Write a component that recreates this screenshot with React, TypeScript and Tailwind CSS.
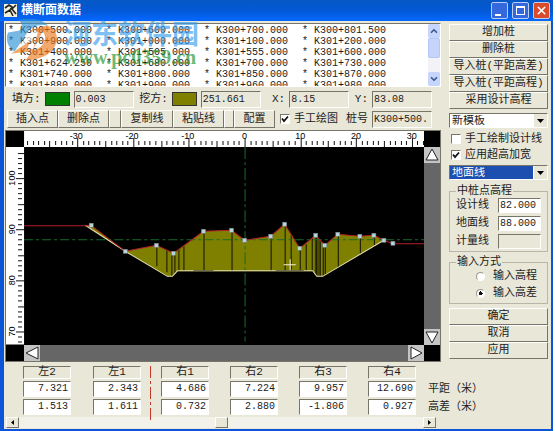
import { ChevronDown, ChevronUp, X } from "lucide-react";
import type { ReactNode } from "react";

const stations = [
  "K300+500.000", "K300+600.000", "K300+700.000", "K300+801.500",
  "K300+900.000", "K301+000.000", "K301+100.000", "K301+200.000",
  "K301+400.000", "K301+505.000", "K301+555.000", "K301+600.000",
  "K301+624.250", "K301+680.000", "K301+700.000", "K301+730.000",
  "K301+740.000", "K301+800.000", "K301+850.000", "K301+870.000",
  "K301+880.000", "K301+900.000", "K301+960.000", "K301+980.000"
];

const leftColumns = [
  { name: "左2", distance: "7.321", delta: "1.513" },
  { name: "左1", distance: "2.343", delta: "1.611" }
];

const rightColumns = [
  { name: "右1", distance: "4.686", delta: "0.732" },
  { name: "右2", distance: "7.224", delta: "2.880" },
  { name: "右3", distance: "9.957", delta: "-1.806" },
  { name: "右4", distance: "12.690", delta: "0.927" }
];

const raised =
  "border border-t-white border-l-white border-r-[#77756a] border-b-[#77756a] bg-[#e9e7d8]";
const sunken =
  "border border-t-[#77756a] border-l-[#77756a] border-r-white border-b-white";
const mono = "font-['Liberation_Mono','Noto_Sans_CJK_SC',monospace] text-[10px]";

// ground line handles, drawing coordinates
const handles = [
  [85, 94], [119, 120], [150, 114], [167, 122], [197, 100], [225, 99], [238, 109],
  [264, 105], [278, 93], [293, 117], [309, 104], [318, 114], [331, 103],
  [353, 105], [367, 104], [377, 109], [386, 112]
];

// vertical strips: x, top, bottom
const strips = [
  [150, 114, 135], [160, 119, 141], [165, 121, 145], [168, 122, 145], [172, 118, 140],
  [177, 115, 140], [197, 100, 140], [225, 99, 140], [264, 105, 140], [278, 93, 140],
  [284, 104, 140], [293, 117, 140], [299, 113, 140], [305, 107, 140],
  [309, 104, 145], [313, 108, 145], [316, 112, 145], [318, 114, 143],
  [331, 103, 136], [353, 105, 122], [367, 104, 114]
];

function RulerTop() {
  const ticks = [];
  for (let u = -39; u <= 32; u++) {
    const x = Math.round(238 + u * 5.56);
    if (x < 20) continue;
    const len = u % 10 === 0 ? 9 : u % 5 === 0 ? 6 : 4;
    ticks.push(<path key={u} d={`M${x + 0.5} ${(len === 4 ? 14 : 16) - len}v${len}`} />);
  }
  return (
    <g>
      <path d="M18 0H417V16H18z" fill="#fff" />
      <g stroke="#111">{ticks}</g>
      {[-30, -20, -10, 0, 10, 20, 30].map((u) => (
        <text key={u} x={238 + u * 5.56 - (u < 0 ? 1 : 0)} y="8" textAnchor="middle">
          {u}
        </text>
      ))}
    </g>
  );
}

function RulerLeft() {
  const ticks = [];
  for (let e = 68; e <= 105; e++) {
    const y = Math.round(98 + (90 - e) * 5.1);
    const len = e % 10 === 0 ? 8 : e % 5 === 0 ? 6 : 4;
    ticks.push(<path key={e} d={`M${(len === 4 ? 16 : 18) - len} ${y + 0.5}h${len}`} />);
  }
  return (
    <g>
      <path d="M0 16H18V213H0z" fill="#fff" />
      <g stroke="#111">{ticks}</g>
      {[70, 80, 90, 100].map((e) => (
        <text
          key={e}
          textAnchor="middle"
          transform={`translate(9 ${98 + (90 - e) * 5.1}) rotate(-90)`}
        >
          {e}
        </text>
      ))}
    </g>
  );
}

function SectionDrawing() {
  return (
    <svg
      viewBox="0 0 417 213"
      className="block h-auto w-full bg-black font-['Liberation_Sans',sans-serif] text-[9px]"
      role="img"
      aria-label="横断面"
    >
      <RulerTop />
      <RulerLeft />
      <path
        d="M79 94L85 94L119 120L150 114L167 122L197 100L225 99L238 109L264 105L278 93L293 117L309 104L318 114L331 103L353 105L367 104L377 109L316 145H310L306 140H171L166 145H161L119 120z"
        fill="#808000"
      />
      <path d="M308 106L313 108V145H310L308 143z" fill="#4a4a00" />
      <g stroke="#111100">
        {strips.map(([x, top, bottom]) => (
          <path key={x} d={`M${x + 0.5} ${top}V${bottom}`} />
        ))}
      </g>
      <g stroke="#176b2b" fill="none">
        <path d="M18 108.500H417" strokeDasharray="9 3 3 3" />
        <path d="M238.500 16V210" strokeDasharray="12 3 3 3" />
      </g>
      <path
        d="M79 94L119 120L161 145H166L171 139.500H306L310 145H316L377 109"
        fill="none"
        stroke="#e4e0b4"
      />
      <path d="M187 139.500H207M269 139.500H297" stroke="#55553a" />
      <path
        d="M18 94.500H85L119 120L150 114L167 122L197 100L225 99L238 109L264 105L278 93L293 117L309 104L318 114L331 103L353 105L367 104L377 109L386 112.500H417"
        fill="none"
        stroke="#b0202a"
      />
      {handles.map(([x, y]) => (
        <rect key={x} x={x - 2} y={y - 2} width="4" height="4" fill="#b5d3d8" stroke="#777f86" strokeWidth="0.5" />
      ))}
      <path d="M277 133.500H289M283.500 128V139" stroke="#f2f2dc" />
    </svg>
  );
}

function ArrowButton({ label, points }: { label: string; points: string }) {
  return (
    <button type="button" aria-label={label} className="flex h-4 w-4 shrink-0 items-center justify-center bg-[#c4c4c4]">
      <svg viewBox="0 0 16 16" className="h-4 w-4">
        <polygon points={points} fill="#fff" stroke="#222" />
      </svg>
    </button>
  );
}

function PushButton({ children, className = "" }: { children?: ReactNode; className?: string }) {
  return (
    <button type="button" className={`${raised} whitespace-nowrap text-center leading-[15px] ${className}`}>
      {children}
    </button>
  );
}

function Check({ label, checked = false }: { label: string; checked?: boolean }) {
  return (
    <label className="flex h-4 items-center gap-1 whitespace-nowrap">
      <span className="relative flex h-[10px] w-[10px] shrink-0">
        <input
          type="checkbox"
          defaultChecked={checked}
          className={`peer h-[10px] w-[10px] appearance-none bg-white ${sunken}`}
        />
        <svg viewBox="0 0 10 10" className="pointer-events-none absolute inset-0 hidden peer-checked:block">
          <path d="M2 4.500L4 7L8 2.500" fill="none" stroke="#111" strokeWidth="1.8" />
        </svg>
      </span>
      {label}
    </label>
  );
}

function Radio({ label, checked = false }: { label: string; checked?: boolean }) {
  return (
    <label className="flex h-[17px] items-center gap-2 whitespace-nowrap pl-5">
      <input
        type="radio"
        name="mode"
        defaultChecked={checked}
        className="h-[9px] w-[9px] shrink-0 appearance-none rounded-full border border-[#99978c] border-r-white border-b-white bg-white checked:bg-[radial-gradient(circle,#111_0_2px,#fff_2px)]"
      />
      {label}
    </label>
  );
}

function Reading({ id, label, value, children }: { id: string; label: string; value: string; children?: ReactNode }) {
  return (
    <div className="flex items-center gap-1">
      <label htmlFor={id} className="flex items-center whitespace-nowrap">
        {label}
      </label>
      {children}
      <input id={id} readOnly defaultValue={value} className={`${mono} ${sunken} h-[17px] w-[60px] px-px`} />
    </div>
  );
}

function Dropdown({ label, value, selected = false }: { label: string; value: string; selected?: boolean }) {
  return (
    <div className={`relative h-[15px] bg-white ${sunken}`}>
      <select
        aria-label={label}
        className={`block h-[13px] w-[83px] appearance-none pt-px pl-[2px] leading-3 ${selected ? "bg-[#1c4fb0] text-white" : ""}`}
      >
        <option>{value}</option>
      </select>
      <span className="pointer-events-none absolute top-0 right-0 flex h-[13px] w-[13px] items-center justify-center bg-[#e9e7d8]">
        <svg viewBox="0 0 7 4" className="h-1 w-[7px]">
          <path d="M0 0H7L3.500 4z" />
        </svg>
      </span>
    </div>
  );
}

function StationColumn({ name, distance, delta }: { name: string; distance: string; delta: string }) {
  const field = `${mono} ${sunken} block h-4 w-full bg-white pr-[2px] text-right`;
  return (
    <div className="w-12">
      <div className={`${sunken} h-[13px] text-center leading-[11px]`}>{name}</div>
      <input aria-label={`${name} 平距`} defaultValue={distance} className={`${field} mt-[2px]`} />
      <input aria-label={`${name} 高差`} defaultValue={delta} className={`${field} mt-[2px]`} />
    </div>
  );
}

function Watermark() {
  return (
    <div className="pointer-events-none absolute top-[-4px] left-px flex opacity-65">
      <svg viewBox="0 0 56 46" className="h-[44px] w-[54px] shrink-0">
        <path d="M13 1C25-2 38 0 44 7C34 5 25 8 21 16L9 34C1 30-1 20 2 14L14 12C17 8 17 4 13 1z" fill="#2f93d8" />
        <path d="M9 34C15 24 25 13 42 7C35 13 29 17 25 23L16 34z" fill="#fff" />
        <path d="M31 12C43 1 54 10 53 22C51 35 38 43 20 43L27 34L5 36L25 23L22 32H30C39 30 44 19 38 13L28 32L33 14z" fill="#ee7c22" />
      </svg>
      <div className="pl-1">
        <p className="whitespace-nowrap font-['Noto_Sans_CJK_SC',sans-serif] text-[27px] leading-[28px] font-bold text-[#3a9fee]">
          河东软件园
        </p>
        <p className="font-['Liberation_Serif',serif] text-[20px] leading-[20px] font-bold text-[#1f9632]">
          www.pc0359.cn
        </p>
      </div>
    </div>
  );
}

function TitleBar() {
  const control = "flex h-[17px] w-[17px] items-center justify-center rounded-[2px] border border-[#b9cdf5] text-white";
  return (
    <header className="flex h-[21px] items-center bg-linear-to-b from-[#0558c4] via-[#0458d6] to-[#0568ff] pr-[3px] pl-1">
      <svg viewBox="0 0 13 13" className="h-[13px] w-[13px] bg-[#f3f1da]">
        <path d="M1 4L5 1L8 3L6 6L9 12M1 9L6 6M12 1L8 5L12 10" fill="none" stroke="#222" strokeWidth="1.6" />
      </svg>
      <h1 className="flex-1 pl-1 text-[12px] leading-4 font-bold text-white">横断面数据</h1>
      <div className="flex gap-1">
        <button type="button" aria-label="最小化" className={`${control} bg-[#3568dc]`}>
          <span className="mt-2 mr-1 h-[2px] w-[6px] bg-white" />
        </button>
        <button type="button" aria-label="最大化" className={`${control} bg-[#3568dc]`}>
          <span className="h-[9px] w-[9px] border border-t-2 border-white" />
        </button>
        <button type="button" aria-label="关闭" className={`${control} bg-[#dc4a2c]`}>
          <X size={13} strokeWidth={3} />
        </button>
      </div>
    </header>
  );
}

function StationList() {
  return (
    <div className="relative">
      <div className={`${sunken} flex h-[64px] overflow-hidden bg-white`}>
        <ul className={`${mono} grid flex-1 auto-rows-[11px] grid-cols-4 content-start pt-px leading-[11px] whitespace-pre`}>
          {stations.map((station) => (
            <li key={station} className="pl-[2px]">
              {"* " + station}
            </li>
          ))}
        </ul>
        <div className="w-[30px] shrink-0" />
        <div className="flex w-3 shrink-0 flex-col bg-[#f3f3f7]">
          <button type="button" aria-label="向上" className="flex h-[14px] items-center justify-center rounded-[2px] bg-[#c6d5fb] text-[#3d5a8c]">
            <ChevronUp size={10} strokeWidth={4} />
          </button>
          <div className="h-5 rounded-[2px] border border-[#b4c6f4] bg-[#c6d3fa]" />
          <div className="flex-1" />
          <button type="button" aria-label="向下" className="flex h-[14px] items-center justify-center rounded-[2px] bg-[#c6d5fb] text-[#3d5a8c]">
            <ChevronDown size={10} strokeWidth={4} />
          </button>
        </div>
      </div>
      <Watermark />
    </div>
  );
}

function Toolbar() {
  return (
    <div className="px-[2px]">
      <div className="mt-[3px] flex h-[18px] items-center justify-between pr-[7px] pl-[5px]">
        <Reading id="fill" label="填方:" value="0.003">
          <span className="h-[14px] w-[25px] border border-[#333] bg-[#008000]" />
        </Reading>
        <Reading id="cut" label="挖方:" value="251.661">
          <span className="h-[14px] w-[25px] border border-[#333] bg-[#808000]" />
        </Reading>
        <span />
        <Reading id="x" label="X:" value="8.15" />
        <Reading id="y" label="Y:" value="83.08" />
      </div>
      <div className="mt-[2px] flex h-[18px] items-center pr-[7px]">
        <PushButton className="h-[18px] w-[51px]">插入点</PushButton>
        <PushButton className="h-[18px] w-[51px]">删除点</PushButton>
        <PushButton className="h-[18px] w-3" />
        <PushButton className="h-[18px] w-[52px]">复制线</PushButton>
        <PushButton className="h-[18px] w-[51px]">粘贴线</PushButton>
        <PushButton className="h-[18px] w-[10px]" />
        <PushButton className="h-[18px] w-[41px]">配置</PushButton>
        <div className="flex flex-1 items-center justify-between pl-[5px]">
          <Check label="手工绘图" checked />
          <Reading id="pile" label="桩号" value="K300+500." />
        </div>
      </div>
    </div>
  );
}

function DrawingPanel() {
  return (
    <div className="mt-[2px] border border-[#77756a] bg-black">
      <div className="flex">
        <div className="min-w-0 flex-1">
          <SectionDrawing />
        </div>
        <div className="mt-4 flex w-4 shrink-0 flex-col justify-between bg-[#666]">
          <ArrowButton label="上移" points="8,2 14,13 2,13" />
          <ArrowButton label="下移" points="8,14 14,3 2,3" />
        </div>
      </div>
      <div className="mr-4 ml-[18px] flex h-4 justify-between bg-[#666]">
        <ArrowButton label="左移" points="2,8 14,2 14,14" />
        <ArrowButton label="右移" points="14,8 3,2 3,14" />
      </div>
    </div>
  );
}

function SidePanel() {
  const group = "min-w-0 border border-[#b8b6a8]";
  const field = `${mono} ${sunken} h-[15px] w-[43px] px-px`;
  const row = "flex h-4 items-center justify-between";
  return (
    <aside className="flex w-[99px] shrink-0 flex-col pt-[3px]">
      <div className="flex flex-col">
        <PushButton className="h-[17px]">增加桩</PushButton>
        <PushButton className="h-[17px]">删除桩</PushButton>
        <PushButton className="h-[17px]">导入桩(平距高差)</PushButton>
        <PushButton className="h-[17px]">导入桩(平距高程)</PushButton>
        <PushButton className="h-[17px]">采用设计高程</PushButton>
      </div>
      <div className="mt-1">
        <Dropdown label="模板" value="新模板" />
      </div>
      <div className="mt-[3px] pl-[2px]">
        <Check label="手工绘制设计线" />
        <Check label="应用超高加宽" checked />
      </div>
      <div className="mt-[2px]">
        <Dropdown label="线型" value="地面线" selected />
      </div>
      <fieldset className={`${group} mt-[5px] px-[6px] pb-[2px]`}>
        <legend className="px-px leading-3">中桩点高程</legend>
        <div className="flex flex-col gap-[2px]">
          <label className={row}>
            设计线
            <input defaultValue="82.000" className={`${field} bg-white`} />
          </label>
          <label className={row}>
            地面线
            <input defaultValue="88.000" className={`${field} bg-white`} />
          </label>
          <label className={row}>
            计量线
            <input disabled className={field} />
          </label>
        </div>
      </fieldset>
      <fieldset className={`${group} mt-1 px-[6px] pb-px`}>
        <legend className="px-px leading-3">输入方式</legend>
        <Radio label="输入高程" />
        <Radio label="输入高差" checked />
      </fieldset>
      <div className="mt-1 flex flex-col">
        <PushButton className="h-[17px]">确定</PushButton>
        <PushButton className="h-[17px]">取消</PushButton>
        <PushButton className="h-[17px]">应用</PushButton>
      </div>
    </aside>
  );
}

function OffsetTable() {
  return (
    <section>
      <div className="flex pt-1 pl-[18px]">
        <div className="flex gap-[22px]">
          {leftColumns.map((column) => (
            <StationColumn key={column.name} {...column} />
          ))}
        </div>
        <svg viewBox="0 0 20 56" className="-mb-2 h-14 w-5 shrink-0">
          <path d="M9.500 0V56" stroke="#c0392b" strokeDasharray="12 3 3 3" />
        </svg>
        <div className="flex gap-[21px]">
          {rightColumns.map((column) => (
            <StationColumn key={column.name} {...column} />
          ))}
        </div>
        <div className="flex flex-col gap-[2px] pt-[15px] pl-3 leading-4 whitespace-nowrap">
          <span>平距（米）</span>
          <span>高差（米）</span>
        </div>
      </div>
      <div className="mt-[2px] mr-[115px] ml-px flex h-[11px] justify-between bg-[#f3f2ea]">
        <button type="button" aria-label="向左滚动" className={`${raised} flex w-[13px] items-center justify-center`}>
          <svg viewBox="0 0 3 5" className="h-[5px] w-[3px]"><path d="M3 0V5L0 2.500z" /></svg>
        </button>
        <div className={`${raised} w-[13px]`} />
        <button type="button" aria-label="向右滚动" className={`${raised} flex w-[13px] items-center justify-center`}>
          <svg viewBox="0 0 3 5" className="h-[5px] w-[3px]"><path d="M0 0V5L3 2.500z" /></svg>
        </button>
      </div>
    </section>
  );
}

export default function App() {
  return (
    <div className="flex min-h-screen flex-col bg-white pr-[3px] font-['Liberation_Mono','Noto_Sans_CJK_SC',monospace] text-[11px] text-[#1c1c1c]">
      <div className="flex flex-1 flex-col bg-[#0b55d8]">
        <TitleBar />
        <main className="mr-[2px] mb-[2px] ml-1 flex-1 bg-[#e9e7d8] pl-px">
          <div className="flex gap-2 pr-[3px]">
            <div className="min-w-0 flex-1 pt-[2px]">
              <StationList />
              <Toolbar />
              <DrawingPanel />
            </div>
            <SidePanel />
          </div>
          <OffsetTable />
        </main>
      </div>
    </div>
  );
}
